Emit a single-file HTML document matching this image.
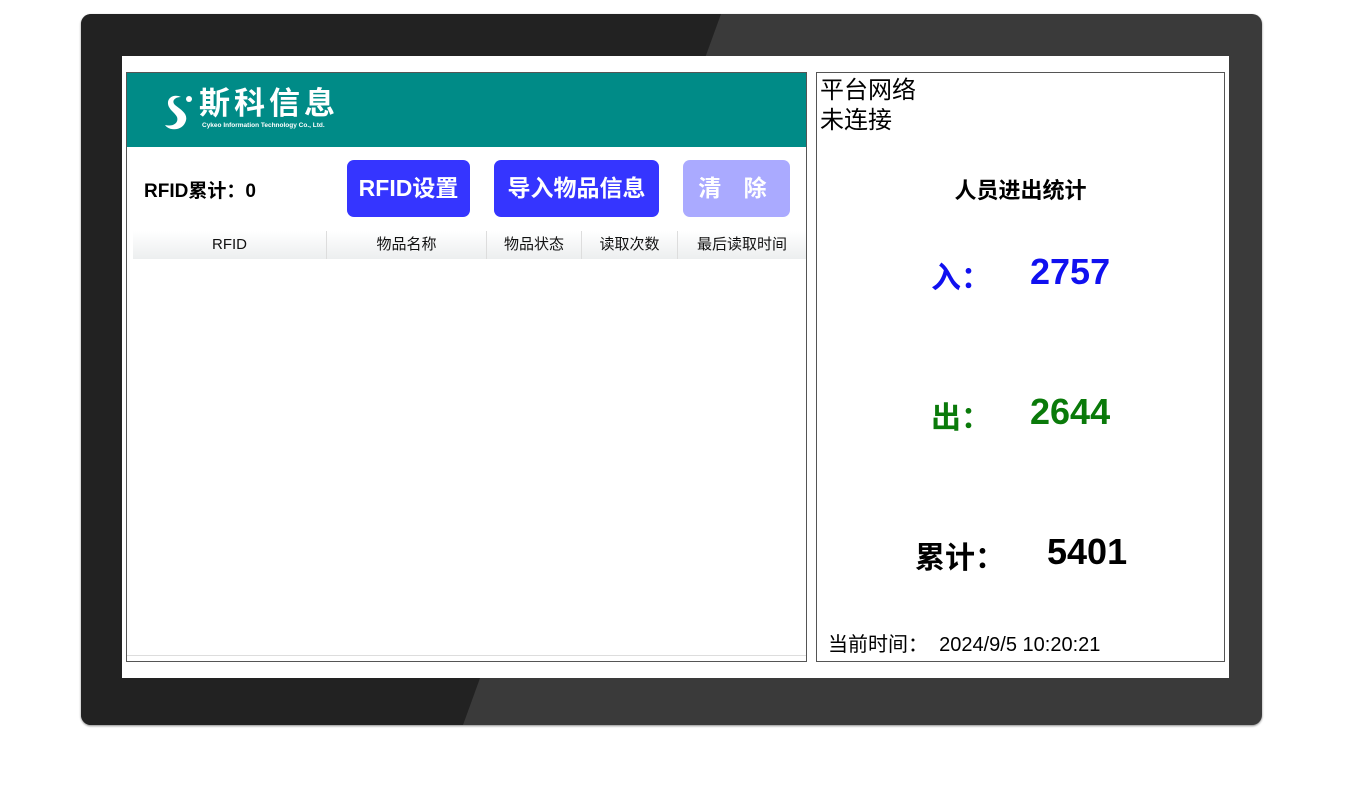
<!DOCTYPE html>
<html><head><meta charset="utf-8"><style>
*{margin:0;padding:0;box-sizing:border-box}
body{width:1370px;height:789px;background:#fff;position:relative;overflow:hidden;font-family:"Liberation Sans","Noto Sans CJK SC",sans-serif}
.abs{position:absolute}
.bezel{left:81px;top:14px;width:1181px;height:711px;border-radius:10px;background:#3a3a3a;overflow:hidden;box-shadow:0 1px 2px #888}
.screen{left:122px;top:56px;width:1107px;height:622px;background:#fff}
.lp{left:126px;top:72px;width:681px;height:590px;border:1px solid #555;background:#fff}
.rp{left:816px;top:72px;width:409px;height:590px;border:1px solid #555;background:#fff}
.btn{position:absolute;top:87px;height:57px;border-radius:7px;color:#fff;font-weight:bold;font-size:23px;text-align:center;line-height:57px}
.th{position:absolute;top:158px;height:28px;font-size:15px;line-height:28px;text-align:center;color:#111;border-right:1px solid #ddd;background:linear-gradient(#fff,#eceeef)}
</style></head><body>
<div class="abs bezel"><svg width="1181" height="711" style="position:absolute;left:0;top:0"><polygon points="0,0 640,0 382,711 0,711" fill="#222"/></svg></div>
<div class="abs screen"></div>
<div class="abs lp">
 <div style="position:absolute;left:0;top:0;width:679px;height:74px;background:#008b87"></div>
 <svg style="position:absolute;left:36px;top:16px" width="34" height="44" viewBox="0 0 34 44"><path d="M6 18 C2 10 10 4 18 8 C12 8 8 12 12 16 C20 22 26 26 22 34 C18 42 6 42 2 36 C10 38 16 34 14 28 C12 24 8 22 6 18Z" fill="#fff"/><circle cx="26" cy="10" r="3" fill="#fff"/></svg>
 <div style="position:absolute;left:72px;top:12px;color:#fff;font-size:31px;letter-spacing:4px;line-height:38px;font-weight:bold">斯科信息</div>
 <div style="position:absolute;left:75px;top:49px;color:#fff;font-size:6.5px;font-weight:bold">Cykeo Information Technology Co., Ltd.</div>
 <div style="position:absolute;left:17px;top:103px;font-size:19px;font-weight:bold">RFID累计：0</div>
 <div class="btn" style="left:220px;width:123px;background:#3535ff">RFID设置</div>
 <div class="btn" style="left:367px;width:165px;background:#3535ff">导入物品信息</div>
 <div class="btn" style="left:556px;width:107px;background:#aaaaff;letter-spacing:8px">清 除</div>
 <div class="th" style="left:6px;width:194px">RFID</div>
 <div class="th" style="left:200px;width:160px">物品名称</div>
 <div class="th" style="left:360px;width:95px">物品状态</div>
 <div class="th" style="left:455px;width:96px">读取次数</div>
 <div class="th" style="left:551px;width:128px;border-right:0">最后读取时间</div>
 <div style="position:absolute;left:0;top:582px;width:679px;height:1px;background:#ddd"></div>
</div>
<div class="abs rp">
 <div style="position:absolute;left:3px;top:3px;font-size:24px;line-height:30px">平台网络<br>未连接</div>
 <div style="position:absolute;left:0;width:407px;top:100px;text-align:center;font-size:22px;font-weight:bold">人员进出统计</div>
 <div style="position:absolute;left:114px;top:180px;font-size:30px;font-weight:bold;color:#1010f0">入：</div>
 <div style="position:absolute;left:213px;top:178px;font-size:36px;font-weight:bold;color:#1010f0">2757</div>
 <div style="position:absolute;left:114px;top:320px;font-size:30px;font-weight:bold;color:#0a7a0a">出：</div>
 <div style="position:absolute;left:213px;top:318px;font-size:36px;font-weight:bold;color:#0a7a0a">2644</div>
 <div style="position:absolute;left:98px;top:460px;font-size:30px;font-weight:bold">累计：</div>
 <div style="position:absolute;left:230px;top:458px;font-size:36px;font-weight:bold">5401</div>
 <div style="position:absolute;left:11px;top:555px;font-size:20px">当前时间：&nbsp;&nbsp;2024/9/5 10:20:21</div>
</div>
</body></html>
